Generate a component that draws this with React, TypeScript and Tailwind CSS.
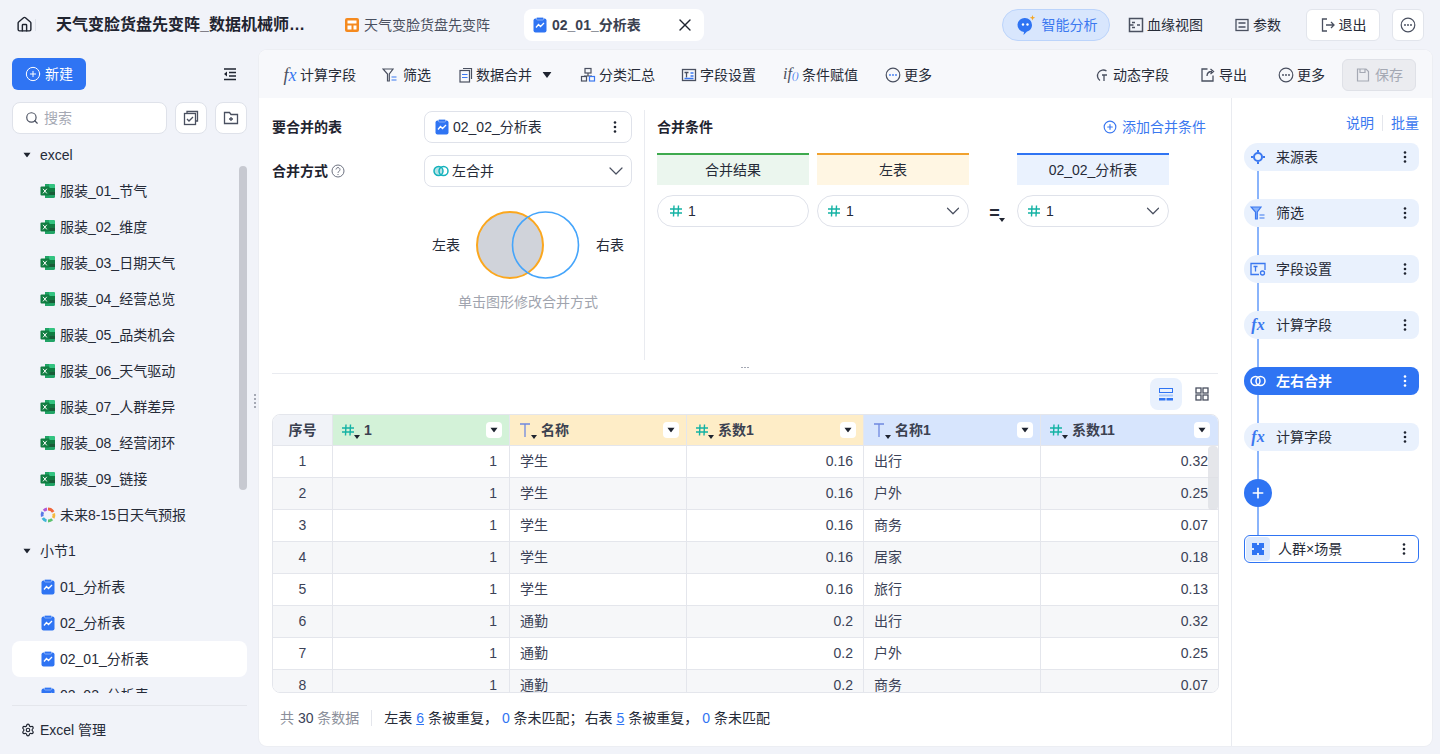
import { ChevronDown, CirclePlus, House, Plus, Search, Settings, X } from "lucide-react"
import type { ReactNode } from "react"

const font = "font-['Liberation_Sans','Noto_Sans_CJK_SC',sans-serif]"

function ChartIcon({ className = "w-[14px] h-4" }: { className?: string }) {
  return (
    <svg className={className} viewBox="0 0 14 16" aria-hidden="true">
      <rect x="0.5" y="1.5" width="13" height="14" rx="2" fill="#2f74f3" />
      <rect x="3.5" y="0.5" width="7" height="2.5" rx="1" fill="#2f74f3" stroke="#bcd4fb" strokeWidth="0.6" />
      <path d="M3 10.5l2.5-3 2 2 3.5-3.5" fill="none" stroke="#fff" strokeWidth="1.3" />
    </svg>
  )
}

function ExcelIcon() {
  return (
    <svg className="w-4 h-4 shrink-0" viewBox="0 0 16 16" aria-hidden="true">
      <path d="M5 1h8.500A1.500 1.500 0 0115 2.500v11a1.500 1.500 0 01-1.500 1.500H5z" fill="#21a366" />
      <path d="M9 5h6v3.500H9z" fill="#107c41" />
      <path d="M9 8.500h6V12H9z" fill="#185c37" />
      <path d="M9 1h4.500A1.500 1.500 0 0115 2.500V5H9z" fill="#33c481" />
      <rect x="0.500" y="3.500" width="9" height="9" rx="1" fill="#107c41" />
      <path d="M3 5.800l3.800 4.600M6.800 5.800L3 10.400" stroke="#fff" strokeWidth="1" />
    </svg>
  )
}

function RainbowIcon() {
  return (
    <svg className="w-4 h-4 shrink-0" viewBox="0 0 16 16" fill="none" strokeWidth="2.800" aria-hidden="true">
      <path d="M8 2a6 6 0 015.200 3" stroke="#f0653a" />
      <path d="M13.700 6.500a6 6 0 01-.500 4.500" stroke="#f5b83d" />
      <path d="M12.200 12.300A6 6 0 018 14" stroke="#5cc26e" />
      <path d="M6.500 13.800a6 6 0 01-3.700-2.800" stroke="#3fb6d8" />
      <path d="M2.300 9.500a6 6 0 01.500-4.500" stroke="#5a78e6" />
      <path d="M3.800 3.700A6 6 0 017 2" stroke="#b05ad6" />
    </svg>
  )
}

function Hash({ className = "w-3 h-3" }: { className?: string }) {
  return (
    <svg className={`${className} shrink-0`} viewBox="0 0 12 12" fill="none" stroke="#14b2a4" strokeWidth="1.400" aria-hidden="true">
      <path d="M4 0.500L3.500 11.500M8.500 0.500L8 11.500M0 4h12M0 8h12" />
    </svg>
  )
}

function Caret({ className = "" }: { className?: string }) {
  return (
    <svg className={className} width="6" height="4" viewBox="0 0 6 4" aria-hidden="true">
      <path d="M0 0h6L3 4z" fill="#1f2430" />
    </svg>
  )
}

function Dots({ className = "text-[#1f2430]" }: { className?: string }) {
  return (
    <svg className={`w-4 h-4 shrink-0 ${className}`} viewBox="0 0 16 16" fill="currentColor" aria-hidden="true">
      <circle cx="8" cy="3.500" r="1.300" />
      <circle cx="8" cy="8" r="1.300" />
      <circle cx="8" cy="12.500" r="1.300" />
    </svg>
  )
}

function MoreCircle({ accent = "#3e4557" }: { accent?: string }) {
  return (
    <svg className="w-4 h-4 shrink-0" viewBox="0 0 16 16" fill="none" aria-hidden="true">
      <circle cx="8" cy="8" r="6.800" stroke="#4a5060" strokeWidth="1.200" />
      <circle cx="5" cy="8" r="0.900" fill={accent} />
      <circle cx="8" cy="8" r="0.900" fill={accent} />
      <circle cx="11" cy="8" r="0.900" fill={accent} />
    </svg>
  )
}

function Fx({ blue = false }: { blue?: boolean }) {
  return (
    <span className={`w-4 text-center font-['Liberation_Serif',serif] italic leading-4 shrink-0 ${blue ? "text-[16px] font-bold text-[#3b78f0]" : "text-[18px] text-[#4a5060]"}`}>
      f<span className="text-[#3b78f0]">x</span>
    </span>
  )
}

function FilterIcon({ blue = false }: { blue?: boolean }) {
  const c = blue ? "#3b78f0" : "#4a5060"
  return (
    <svg className="w-4 h-4 shrink-0" viewBox="0 0 16 16" fill={blue ? "#8ab4fb" : "none"} stroke={c} strokeWidth="1.200" aria-hidden="true">
      <path d="M1 2h10L7.300 7v7H5.500V7z" />
      <path d="M9.500 10h5M9.500 13h5" stroke={blue ? c : "#3b78f0"} />
    </svg>
  )
}

function FieldIcon({ blue = false }: { blue?: boolean }) {
  const c = blue ? "#3b78f0" : "#4a5060"
  return (
    <svg className="w-4 h-4 shrink-0" viewBox="0 0 16 16" fill="none" stroke={c} strokeWidth="1.300" aria-hidden="true">
      {blue ? <path d="M9 13.500H1v-11h14V9" /> : <rect x="1.500" y="2.500" width="13" height="11" />}
      <path d="M3.500 5.500h4M5.500 5.500v5" />
      {blue ? <circle cx="12.500" cy="12" r="2" /> : <path d="M9.500 6h3M9.500 9h3M3.500 11.500h9" stroke="#3b78f0" />}
    </svg>
  )
}

function MergeIcon({ color = "#14b2bc", size = "w-4 h-4" }: { color?: string; size?: string }) {
  return (
    <svg className={`${size} shrink-0`} viewBox="0 0 16 16" fill="none" stroke={color} strokeWidth="1.500" aria-hidden="true">
      <circle cx="5.500" cy="8" r="4.500" fill={color === "#fff" ? "none" : "#b5e3e6"} />
      <circle cx="10.500" cy="8" r="4.500" />
    </svg>
  )
}

function ToolItem({ icon, label, extra, className = "gap-[3px]" }: { icon: ReactNode; label: string; extra?: ReactNode; className?: string }) {
  return (
    <div className={`flex items-center text-sm text-[#262b38] ${className}`}>
      {icon}
      <span>{label}</span>
      {extra}
    </div>
  )
}

function TreeRow({ icon, label, active }: { icon: ReactNode; label: string; active?: boolean }) {
  return (
    <div className={`h-9 ml-3 mr-3 pl-7 flex items-center gap-1 text-sm text-[#262b38] rounded-lg ${active ? "bg-white" : ""}`}>
      {icon}
      <span>{label}</span>
    </div>
  )
}

function TreeGroup({ label }: { label: string }) {
  return (
    <div className="h-9 pl-6 flex items-center gap-2.5 text-sm text-[#262b38]">
      <Caret className="scale-125" />
      <span>{label}</span>
    </div>
  )
}

function FlowNode({ icon, label, active }: { icon: ReactNode; label: string; active?: boolean }) {
  return (
    <div className={`h-7 pl-1.5 pr-1.5 flex items-center rounded-l-[14px] rounded-r-lg text-sm ${active ? "bg-[#2f74f3] text-white font-bold" : "bg-[#e9f1fd] text-[#262b38]"}`}>
      <span className="w-4 h-4 flex items-center justify-center">{icon}</span>
      <span className="ml-2.5 flex-1">{label}</span>
      <Dots className={active ? "text-white" : "text-[#1f2430]"} />
    </div>
  )
}

function FlowLine() {
  return <div className="w-0.5 h-7 ml-[13px] bg-[#8ab4fb]" />
}

function ColumnHead({ title, bg, text, last }: { title: string; bg: string; text?: boolean; last?: boolean }) {
  return (
    <div className={`w-[177px] ${bg} ${last ? "pr-2" : "border-r pr-[7px]"} h-[31px] border-b border-[#e4e6ec] pl-[9px] flex items-center font-bold text-sm text-[#3b4150]`}>
      <span className="relative w-[22px] h-[14px] shrink-0">
        {text ? (
          <svg className="w-3 h-[14px]" viewBox="0 0 12 14" fill="none" stroke="#6f88e0" strokeWidth="1.300" aria-hidden="true">
            <path d="M1 1h10M6 1v13" />
          </svg>
        ) : (
          <Hash className="w-3 h-3 mt-px" />
        )}
        <Caret className="absolute left-[12px] top-[12px]" />
      </span>
      <span className="flex-1">{title}</span>
      <span className="w-4 h-4 bg-white rounded-sm flex items-center justify-center">
        <Caret className="scale-125" />
      </span>
    </div>
  )
}

const rows = [
  ["1", "学生", "0.16", "出行", "0.32"],
  ["2", "学生", "0.16", "户外", "0.25"],
  ["3", "学生", "0.16", "商务", "0.07"],
  ["4", "学生", "0.16", "居家", "0.18"],
  ["5", "学生", "0.16", "旅行", "0.13"],
  ["6", "通勤", "0.2", "出行", "0.32"],
  ["7", "通勤", "0.2", "户外", "0.25"],
  ["8", "通勤", "0.2", "商务", "0.07"],
]

const excelFiles = [
  "服装_01_节气",
  "服装_02_维度",
  "服装_03_日期天气",
  "服装_04_经营总览",
  "服装_05_品类机会",
  "服装_06_天气驱动",
  "服装_07_人群差异",
  "服装_08_经营闭环",
  "服装_09_链接",
]

export default function App() {
  const cell = "h-8 pb-px border-r border-b border-[#e4e6ec] flex items-center"
  return (
    <div className={`${font} w-[1440px] h-[754px] overflow-hidden bg-[#f1f3f9] flex flex-col text-[#262b38]`}>
      {/* top bar */}
      <header className="h-[50px] shrink-0 flex items-center pl-4 pr-4 pb-[1px]">
        <House className="w-[17px] h-[17px] text-[#1f2430]" strokeWidth={2} />
        <div className="w-px h-3 bg-[#dfe2ea] ml-[2px]" />
        <div className="ml-[20px] w-[252px] truncate text-base font-bold text-[#1f2430]">天气变脸货盘先变阵_数据机械师的分析</div>
        <div className="ml-[36px] flex items-center gap-1 text-sm text-[#4a5060]">
          <svg className="w-4 h-4" viewBox="0 0 16 16" aria-hidden="true">
            <rect x="1" y="1" width="14" height="14" rx="2" fill="#f58a1f" />
            <path d="M3.500 3.500h9v3h-9zM3.500 8.500h4v4h-4zM9.500 8.500h3v4h-3z" fill="#fff" />
          </svg>
          <span>天气变脸货盘先变阵</span>
        </div>
        <div className="ml-[34px] w-[180px] h-8 rounded-lg bg-white pl-[9px] pr-[9px] flex items-center gap-[5px] text-sm font-bold text-[#3b4150]">
          <ChartIcon />
          <span className="flex-1">02_01_分析表</span>
          <X className="w-5 h-5 text-[#1f2430]" strokeWidth={1.600} />
        </div>
        <div className="ml-auto h-8 w-[108px] rounded-full bg-[#d8e6fd] border border-[#bcd4fb] flex items-center justify-center gap-[6px] pl-[2px] text-sm text-[#3b78f0]">
          <svg className="w-[19px] h-[20px]" viewBox="0 0 19 20" aria-hidden="true">
            <path d="M8 3a7 7 0 017 7c0 3.500-2.500 6-5 6.500L6.500 20l.5-3A7 7 0 018 3z" fill="#2f74f3" />
            <circle cx="6" cy="9.500" r="1.200" fill="#fff" />
            <circle cx="10.500" cy="9.500" r="1.200" fill="#fff" />
            <path d="M15.500 0l.7 2 2 .7-2 .7-.7 2-.7-2-2-.7 2-.7z" fill="#f5a623" />
          </svg>
          <span>智能分析</span>
        </div>
        <div className="ml-[18px]">
          <ToolItem
            label="血缘视图"
            icon={
              <svg className="w-4 h-4" viewBox="0 0 16 16" fill="none" stroke="#4a5060" strokeWidth="1.500" aria-hidden="true">
                <rect x="1.500" y="1.500" width="13" height="13" />
                <path d="M4 5.500h3M4 10.500h3M9 8h3M1.500 8h4" />
              </svg>
            }
          />
        </div>
        <div className="ml-[31px]">
          <ToolItem
            label="参数"
            icon={
              <svg className="w-4 h-4" viewBox="0 0 16 16" fill="none" stroke="#4a5060" strokeWidth="1.300" aria-hidden="true">
                <rect x="2" y="2.500" width="12" height="11" />
                <path d="M4.500 6h7M4.500 10h7" />
              </svg>
            }
          />
        </div>
        <button className="ml-[25px] w-[74px] h-8 rounded-md bg-white border border-[#e2e5ec] flex items-center justify-center gap-[3px] text-sm">
          <svg className="w-4 h-4" viewBox="0 0 16 16" fill="none" stroke="#4a5060" strokeWidth="1.300" aria-hidden="true">
            <path d="M7 2H2.500v12H7M6 8h8M11 5l3 3-3 3" />
          </svg>
          退出
        </button>
        <button className="ml-3 w-8 h-8 rounded-md bg-white border border-[#e2e5ec] flex items-center justify-center">
          <MoreCircle />
        </button>
      </header>

      <div className="flex-1 min-h-0 flex">
        {/* sidebar */}
        <aside className="w-[259px] shrink-0 flex flex-col relative">
          <div className="px-3 pt-2 flex items-center justify-between pr-[21px]">
            <button className="w-[74px] h-8 rounded-md bg-[#2f74f3] text-white text-sm flex items-center justify-center gap-1">
              <CirclePlus className="w-4 h-4" strokeWidth={1.500} />
              新建
            </button>
            <svg className="w-4 h-4" viewBox="0 0 16 16" fill="none" stroke="#1f2430" strokeWidth="1.400" aria-hidden="true">
              <path d="M2 3h12M7 6.500h7M7 10h7M2 13.500h12" />
              <path d="M5 5.500L2 8l3 2.500z" fill="#1f2430" strokeWidth="0" />
            </svg>
          </div>
          <div className="px-3 mt-3 flex items-center">
            <div className="w-[155px] h-8 rounded-lg bg-white border border-[#dfe2ea] pl-3 flex items-center gap-[5px] text-sm text-[#a5a9b4]">
              <Search className="w-[14px] h-[14px] text-[#4a5060]" />
              <span>搜索</span>
            </div>
            <div className="ml-2 w-8 h-8 rounded-lg bg-white border border-[#dfe2ea] flex items-center justify-center">
              <svg className="w-4 h-4" viewBox="0 0 16 16" fill="none" stroke="#4a5060" strokeWidth="1.300" aria-hidden="true">
                <path d="M4 3V1.500h10.500V11H13" />
                <rect x="1.500" y="3.500" width="11" height="11" />
                <path d="M4 9l2 2 4-4" />
              </svg>
            </div>
            <div className="ml-2 w-8 h-8 rounded-lg bg-white border border-[#dfe2ea] flex items-center justify-center">
              <svg className="w-4 h-4" viewBox="0 0 16 16" fill="none" stroke="#4a5060" strokeWidth="1.300" aria-hidden="true">
                <path d="M1.500 2.500h5l1.500 2h6.500v9h-13zM8 7v4M6 9h4" />
              </svg>
            </div>
          </div>
          <div className="relative mt-[3px] h-[556px] overflow-hidden">
            <TreeGroup label="excel" />
            {excelFiles.map((name) => (
              <TreeRow key={name} icon={<ExcelIcon />} label={name} />
            ))}
            <TreeRow icon={<RainbowIcon />} label="未来8-15日天气预报" />
            <TreeGroup label="小节1" />
            <TreeRow icon={<ChartIcon className="w-[14px] h-4 mx-px" />} label="01_分析表" />
            <TreeRow icon={<ChartIcon className="w-[14px] h-4 mx-px" />} label="02_分析表" />
            <TreeRow icon={<ChartIcon className="w-[14px] h-4 mx-px" />} label="02_01_分析表" active />
            <TreeRow icon={<ChartIcon className="w-[14px] h-4 mx-px" />} label="02_02_分析表" />
            <div className="absolute left-[239px] top-[29px] w-2 h-[324px] rounded bg-[#c7c9d1]" />
          </div>
          <div className="mx-3 mt-3 border-t border-[#e4e6ec] h-[49px] flex items-center gap-[5px] pl-[9px] pb-[1px] text-sm">
            <Settings className="w-[14px] h-[14px] text-[#1f2430]" />
            <span>Excel 管理</span>
          </div>
          <div className="absolute left-[254px] top-[344px] flex flex-col gap-[2px]">
            <i className="w-0.5 h-0.5 bg-[#a5a9b4]" />
            <i className="w-0.5 h-0.5 bg-[#a5a9b4]" />
            <i className="w-0.5 h-0.5 bg-[#a5a9b4]" />
            <i className="w-0.5 h-0.5 bg-[#a5a9b4]" />
          </div>
        </aside>

        {/* main panel */}
        <main className="w-[1173px] h-[696px] rounded-lg bg-white shadow-[0_0_0_1px_#eceef3] overflow-hidden flex flex-col">
          <div className="h-12 shrink-0 bg-[#f7f8fb] flex items-center pl-[23px] pr-4 pt-[2px]">
            <div className="flex items-center">
              <ToolItem icon={<Fx />} label="计算字段" className="gap-[2px]" />
              <ToolItem icon={<FilterIcon />} label="筛选" className="ml-[26px] gap-[5px]" />
              <ToolItem
                className="ml-[27px] gap-[2px]"
                label="数据合并"
                icon={
                  <svg className="w-4 h-4" viewBox="0 0 16 16" fill="none" stroke="#4a5060" strokeWidth="1.200" aria-hidden="true">
                    <path d="M5 1.500h8.500V12" />
                    <rect x="2" y="3.500" width="9.500" height="11.500" />
                    <path d="M4 7.500h5.500M4 10.500h5.500" stroke="#3b78f0" />
                  </svg>
                }
                extra={<Caret className="ml-[10px] scale-150" />}
              />
              <ToolItem
                className="ml-[30px] gap-[3px]"
                label="分类汇总"
                icon={
                  <svg className="w-4 h-4" viewBox="0 0 16 16" fill="none" stroke="#4a5060" strokeWidth="1.200" aria-hidden="true">
                    <rect x="5" y="1.500" width="6" height="4.500" />
                    <path d="M8 6v3M4 9h8" />
                    <rect x="1.500" y="9.500" width="5" height="4.500" />
                    <rect x="9.500" y="9.500" width="5" height="4.500" stroke="#3b78f0" />
                  </svg>
                }
              />
              <ToolItem icon={<FieldIcon />} label="字段设置" className="ml-[26px] gap-[3px]" />
              <ToolItem
                className="ml-[27px] gap-[3px]"
                label="条件赋值"
                icon={
                  <span className="w-4 text-left font-['Liberation_Serif',serif] italic text-[16px] leading-4 text-[#4a5060] shrink-0 whitespace-nowrap">
                    if<span className="text-[10px] text-[#3b78f0]">()</span>
                  </span>
                }
              />
              <ToolItem icon={<MoreCircle accent="#3b78f0" />} label="更多" className="ml-[27px] gap-[3px]" />
            </div>
            <div className="ml-auto flex items-center gap-[30px]">
              <ToolItem
                className="gap-[3px] mr-px"
                label="动态字段"
                icon={
                  <svg className="w-4 h-4" viewBox="0 0 16 16" fill="none" stroke="#4a5060" strokeWidth="1.300" aria-hidden="true">
                    <path d="M12.500 4A5.500 5.500 0 106 13.500M8 8h5M10 8v6" />
                  </svg>
                }
              />
              <ToolItem
                className="gap-[3px] mr-px"
                label="导出"
                icon={
                  <svg className="w-4 h-4" viewBox="0 0 16 16" fill="none" stroke="#4a5060" strokeWidth="1.300" aria-hidden="true">
                    <path d="M7.500 2H2v12h11V8.500M7 9c0-3 2-4.500 5-4.500M10.500 2l3 2.500-3 2.500" />
                  </svg>
                }
              />
              <ToolItem icon={<MoreCircle />} label="更多" />
              <button className="w-[74px] h-8 -ml-[13px] rounded-md bg-[#ebecf0] border border-[#dfe1e7] flex items-center justify-center gap-1 text-sm text-[#a5a9b4]">
                <svg className="w-4 h-4" viewBox="0 0 16 16" fill="none" stroke="#a5a9b4" strokeWidth="1.200" aria-hidden="true">
                  <path d="M2.500 2h8.500l2.500 2.500V14h-11zM5 2v3.500h5V2" />
                </svg>
                保存
              </button>
            </div>
          </div>

          <div className="flex-1 min-h-0 flex">
            <div className="w-[972px] shrink-0 px-[13px] flex flex-col">
              {/* merge config */}
              <div className="h-[276px] shrink-0 border-b border-[#e9ebf0] relative flex">
                <div className="w-[360px] shrink-0 pt-[13px]">
                  <div className="flex items-center h-8">
                    <span className="w-[152px] text-sm font-bold text-[#1f2430]">要合并的表</span>
                    <div className="flex-1 h-8 rounded-lg border border-[#dfe2ea] pl-2.5 pr-2 flex items-center gap-1 text-sm">
                      <ChartIcon />
                      <span className="flex-1">02_02_分析表</span>
                      <Dots />
                    </div>
                  </div>
                  <div className="flex items-center h-8 mt-3">
                    <span className="w-[152px] flex items-center gap-[3px] text-sm font-bold text-[#1f2430]">
                      合并方式
                      <svg className="w-[14px] h-[14px]" viewBox="0 0 14 14" fill="none" stroke="#6d7280" strokeWidth="1" aria-hidden="true">
                        <circle cx="7" cy="7" r="6" />
                        <path d="M5 5.500a2 2 0 113 1.800c-.7.400-1 .8-1 1.500M7 10v1" />
                      </svg>
                    </span>
                    <div className="flex-1 h-8 rounded-lg border border-[#dfe2ea] pl-2 pr-[3px] flex items-center gap-[3px] text-sm">
                      <MergeIcon />
                      <span className="flex-1">左合并</span>
                      <ChevronDown className="w-6 h-6 text-[#4a5060]" strokeWidth={1.200} />
                    </div>
                  </div>
                  <div className="mt-[23px] ml-[160px] flex items-center">
                    <span className="text-sm w-[44px]">左表</span>
                    <svg className="w-[104px] h-[70px]" viewBox="0 0 104 70" fill="none" aria-hidden="true">
                      <circle cx="34" cy="35" r="33" fill="#d0d3da" stroke="#fba71e" strokeWidth="2" />
                      <circle cx="69.500" cy="35" r="33" stroke="#45a5fb" strokeWidth="1.600" />
                    </svg>
                    <span className="text-sm ml-[16px]">右表</span>
                  </div>
                  <div className="mt-[12px] ml-[186px] text-sm text-[#a0a4ae]">单击图形修改合并方式</div>
                </div>

                <div className="mt-3 w-px h-[250px] bg-[#e9ebf0] ml-3" />

                <div className="flex-1 pl-3 pr-3 pt-[13px]">
                  <div className="h-8 flex items-center justify-between">
                    <span className="text-sm font-bold text-[#1f2430]">合并条件</span>
                    <span className="flex items-center gap-[5px] text-sm text-[#3b78f0]">
                      <CirclePlus className="w-[14px] h-[14px]" />
                      添加合并条件
                    </span>
                  </div>
                  <div className="mt-[10px] flex text-sm text-center">
                    <div className="w-[152px] h-8 leading-[30px] bg-[#ebf6ee] border-t-2 border-[#3eaa4e]">合并结果</div>
                    <div className="ml-2 w-[152px] h-8 leading-[30px] bg-[#fff6e3] border-t-2 border-[#f0a12e]">左表</div>
                    <div className="ml-12 w-[152px] h-8 leading-[30px] bg-[#eaf2fe] border-t-2 border-[#2f74f3]">02_02_分析表</div>
                  </div>
                  <div className="mt-2.5 flex items-center text-sm">
                    <div className="w-[152px] h-8 rounded-full border border-[#dfe2ea] pl-3 flex items-center gap-[6px]">
                      <Hash />
                      1
                    </div>
                    <div className="ml-2 w-[152px] h-8 rounded-full border border-[#dfe2ea] pl-[10px] pr-1 flex items-center gap-[6px]">
                      <Hash />
                      <span className="flex-1">1</span>
                      <ChevronDown className="w-[22px] h-[22px] text-[#4a5060]" strokeWidth={1.300} />
                    </div>
                    <div className="w-12 relative text-center pl-[3px] text-lg font-bold leading-none pt-1">
                      =
                      <Caret className="absolute left-[30px] bottom-0" />
                    </div>
                    <div className="w-[152px] h-8 rounded-full border border-[#dfe2ea] pl-[10px] pr-1 flex items-center gap-[6px]">
                      <Hash />
                      <span className="flex-1">1</span>
                      <ChevronDown className="w-[22px] h-[22px] text-[#4a5060]" strokeWidth={1.300} />
                    </div>
                  </div>
                </div>
                <div className="absolute left-[469px] bottom-[5px] flex gap-[1px]">
                  <i className="w-0.5 h-px bg-[#a5a9b4]" />
                  <i className="w-0.5 h-px bg-[#a5a9b4]" />
                  <i className="w-0.5 h-px bg-[#a5a9b4]" />
                </div>
              </div>

              {/* view switch */}
              <div className="h-[40px] shrink-0 flex items-start justify-end pt-1">
                <div className="w-8 h-8 rounded-lg bg-[#e9f1fd] flex items-center justify-center">
                  <svg className="w-4 h-4" viewBox="0 0 16 16" aria-hidden="true">
                    <rect x="1.500" y="2.500" width="13" height="4" fill="none" stroke="#2f74f3" />
                    <path d="M1 8.500h14v2H1z" fill="#a9c8fa" />
                    <path d="M1 12h6.500v2.500H1zM8.500 12H15v2.500H8.500z" fill="#2f74f3" />
                  </svg>
                </div>
                <div className="w-8 h-8 ml-1 flex items-center justify-center">
                  <svg className="w-4 h-4" viewBox="0 0 16 16" fill="none" stroke="#4a5060" strokeWidth="1.300" aria-hidden="true">
                    <rect x="2" y="2" width="5" height="5" />
                    <rect x="9" y="2" width="5" height="5" />
                    <rect x="2" y="9" width="5" height="5" />
                    <rect x="9" y="9" width="5" height="5" />
                  </svg>
                </div>
              </div>

              {/* data table */}
              <div className="relative w-[947px] h-[279px] shrink-0 rounded-lg border border-[#e4e6ec] overflow-hidden text-sm text-[#3b4257]">
                <div className="flex">
                  <div className="w-[60px] h-[31px] shrink-0 bg-[#f1f3f8] border-r border-b border-[#e4e6ec] flex items-center justify-center font-bold text-sm text-[#3b4150]">序号</div>
                  <ColumnHead title="1" bg="bg-[#d3f2d8]" />
                  <ColumnHead title="名称" bg="bg-[#feedc7]" text />
                  <ColumnHead title="系数1" bg="bg-[#feedc7]" />
                  <ColumnHead title="名称1" bg="bg-[#d7e5fd]" text />
                  <ColumnHead title="系数11" bg="bg-[#d7e5fd]" last />
                </div>
                {rows.map((r, i) => (
                  <div key={r[0]} className={`flex ${i % 2 === 1 ? "bg-[#f6f7f9]" : "bg-white"}`}>
                    <div className={`${cell} w-[60px] justify-center`}>{r[0]}</div>
                    <div className={`${cell} w-[177px] justify-end pr-3`}>1</div>
                    <div className={`${cell} w-[177px] pl-2.5`}>{r[1]}</div>
                    <div className={`${cell} w-[177px] justify-end pr-2.5`}>{r[2]}</div>
                    <div className={`${cell} w-[177px] pl-2.5`}>{r[3]}</div>
                    <div className={`${cell} w-[177px] border-r-0 justify-end pr-2.5`}>{r[4]}</div>
                  </div>
                ))}
                <div className="absolute right-0 top-[31px] w-2.5 h-16 rounded bg-[#dfe0e5]/80" />
              </div>

              <div className="h-[49px] shrink-0 flex items-center pl-2 text-sm">
                <span className="text-[#8b8f9a]">
                  共 <span className="text-[#3b4257]">30</span> 条数据
                </span>
                <div className="w-px h-4 bg-[#e4e6ec] ml-3 mr-3" />
                <span>
                  左表 <span className="text-[#2f74f3] underline">6</span> 条被重复，
                  <span className="text-[#2f74f3] ml-1">0</span> 条未匹配；
                  <span className="ml-px">右表</span> <span className="text-[#2f74f3] underline">5</span> 条被重复，
                  <span className="text-[#2f74f3] ml-1">0</span> 条未匹配
                </span>
              </div>
            </div>

            {/* flow panel */}
            <div className="flex-1 border-l border-[#e9ebf0] pl-3 pr-[13px] pt-[15px] flex flex-col">
              <div className="flex items-center justify-end gap-2 text-sm text-[#3b78f0] h-5">
                <span>说明</span>
                <div className="w-px h-4 bg-[#e4e6ec]" />
                <span>批量</span>
              </div>
              <div className="mt-[10px]">
                <FlowNode
                  label="来源表"
                  icon={
                    <svg className="w-[14px] h-[14px]" viewBox="0 0 14 14" fill="none" stroke="#3b78f0" strokeWidth="2" aria-hidden="true">
                      <circle cx="7" cy="7" r="4" />
                      <path d="M7 0v2M7 12v2M0 7h2M12 7h2" />
                    </svg>
                  }
                />
                <FlowLine />
                <FlowNode label="筛选" icon={<FilterIcon blue />} />
                <FlowLine />
                <FlowNode label="字段设置" icon={<FieldIcon blue />} />
                <FlowLine />
                <FlowNode label="计算字段" icon={<Fx blue />} />
                <FlowLine />
                <FlowNode label="左右合并" icon={<MergeIcon color="#fff" />} active />
                <FlowLine />
                <FlowNode label="计算字段" icon={<Fx blue />} />
                <FlowLine />
                <div className="w-7 h-7 rounded-full bg-[#2f74f3] flex items-center justify-center">
                  <Plus className="w-4 h-4 text-white" strokeWidth={2.500} />
                </div>
                <FlowLine />
                <div className="h-7 rounded-md border border-[#2f74f3] bg-white pl-px pr-1.5 flex items-center text-sm">
                  <span className="w-6 h-6 rounded bg-[#dce9fd] flex items-center justify-center">
                    <svg className="w-3 h-3" viewBox="0 0 12 12" aria-hidden="true">
                      <path d="M0 0h5v2h2V0h5v5h-2v2h2v5H7v-2H5v2H0V7h2V5H0z" fill="#2f74f3" />
                    </svg>
                  </span>
                  <span className="ml-2 flex-1">人群×场景</span>
                  <Dots />
                </div>
              </div>
            </div>
          </div>
        </main>
      </div>
    </div>
  )
}
